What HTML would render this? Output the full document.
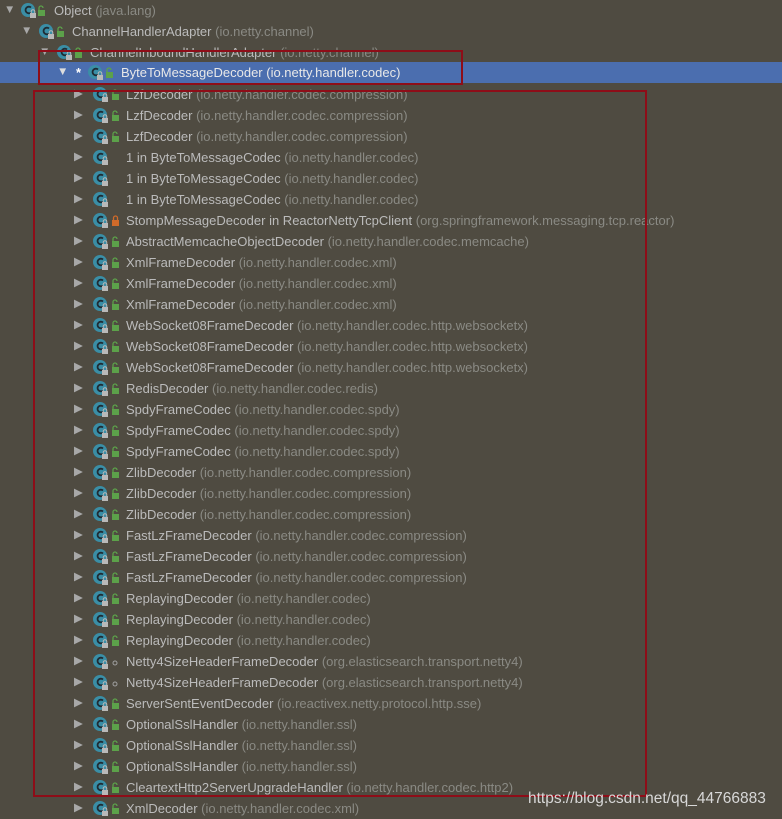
<!DOCTYPE html><html><head><meta charset="utf-8"><style>
body{margin:0;width:782px;height:819px;background:#4f4b41;overflow:hidden;font-family:"Liberation Sans",sans-serif;font-size:13px;color:#bbbbbb;position:relative}
.r{position:absolute;left:0;width:782px;height:21px;line-height:21px;white-space:nowrap;margin-top:1px}
.r span.p{color:#8a8a84}
.a{position:absolute;top:0;color:#a8a8a8;font-size:11.5px}
.ic{position:absolute;top:2px;width:20px;height:18px}
.t{position:absolute;top:0}
.sel{background:#4b6eaf;margin-top:0;line-height:21px}
.sel .t,.sel .t span.p{color:#e8e8e8}
.box{position:absolute;border:2px solid #8e0d18;box-sizing:border-box}
</style></head><body>
<svg width="0" height="0" style="position:absolute"><defs>
<symbol id="c" viewBox="0 0 20 18"><circle cx="8" cy="8" r="7" fill="#3a8ea6"/><path d="M11 5.5A3.3 3.3 0 1 0 11 10.5" stroke="#1f2b33" stroke-width="1.8" fill="none"/><rect x="10" y="11" width="6" height="5" fill="#b9b9b9"/><path d="M11.2 11V9.5a1.8 1.8 0 0 1 3.6 0V11" stroke="#b9b9b9" fill="none"/></symbol>
<symbol id="g" viewBox="0 0 10 18"><rect x="2" y="8" width="7" height="6" fill="#5ca14a"/><path d="M3 8V6a2 2 0 0 1 4 0" stroke="#5ca14a" stroke-width="1.3" fill="none"/></symbol>
<symbol id="o" viewBox="0 0 10 18"><rect x="2" y="8" width="7" height="6" fill="#d06a2a"/><path d="M3.5 8V6a2 2 0 0 1 4 0V8" stroke="#d06a2a" stroke-width="1.3" fill="none"/></symbol>
<symbol id="d" viewBox="0 0 10 18"><circle cx="5" cy="10" r="2" stroke="#a0a0a0" fill="none"/></symbol>
</defs></svg>

<div class="r" style="top:-1px"><span class="a" style="left:4px">▼</span><svg class="ic" style="left:20px"><use href="#c"/></svg><svg class="ic" style="left:36px;width:10px"><use href="#g"/></svg><span class="t" style="left:54px">Object <span class="p">(java.lang)</span></span></div>
<div class="r" style="top:20px"><span class="a" style="left:21px">▼</span><svg class="ic" style="left:38px"><use href="#c"/></svg><svg class="ic" style="left:55px;width:10px"><use href="#g"/></svg><span class="t" style="left:72px">ChannelHandlerAdapter <span class="p">(io.netty.channel)</span></span></div>
<div class="r" style="top:41px"><span class="a" style="left:39px">▼</span><svg class="ic" style="left:56px"><use href="#c"/></svg><svg class="ic" style="left:73px;width:10px"><use href="#g"/></svg><span class="t" style="left:90px">ChannelInboundHandlerAdapter <span class="p">(io.netty.channel)</span></span></div>
<div class="r sel" style="top:62px"><span class="a" style="left:57px;color:#ddd">▼</span><span class="t" style="left:76px;color:#fff;font-weight:bold">*</span><svg class="ic" style="left:87px"><use href="#c"/></svg><svg class="ic" style="left:104px;width:10px"><use href="#g"/></svg><span class="t" style="left:121px">ByteToMessageDecoder <span class="p">(io.netty.handler.codec)</span></span></div>

<div class="r" style="top:83px"><span class="a" style="left:74px">▶</span><svg class="ic" style="left:92px"><use href="#c"/></svg><svg class="ic" style="left:110px;width:10px"><use href="#g"/></svg><span class="t" style="left:126px">LzfDecoder <span class="p">(io.netty.handler.codec.compression)</span></span></div>
<div class="r" style="top:104px"><span class="a" style="left:74px">▶</span><svg class="ic" style="left:92px"><use href="#c"/></svg><svg class="ic" style="left:110px;width:10px"><use href="#g"/></svg><span class="t" style="left:126px">LzfDecoder <span class="p">(io.netty.handler.codec.compression)</span></span></div>
<div class="r" style="top:125px"><span class="a" style="left:74px">▶</span><svg class="ic" style="left:92px"><use href="#c"/></svg><svg class="ic" style="left:110px;width:10px"><use href="#g"/></svg><span class="t" style="left:126px">LzfDecoder <span class="p">(io.netty.handler.codec.compression)</span></span></div>
<div class="r" style="top:146px"><span class="a" style="left:74px">▶</span><svg class="ic" style="left:92px"><use href="#c"/></svg><span class="t" style="left:126px">1 in ByteToMessageCodec <span class="p">(io.netty.handler.codec)</span></span></div>
<div class="r" style="top:167px"><span class="a" style="left:74px">▶</span><svg class="ic" style="left:92px"><use href="#c"/></svg><span class="t" style="left:126px">1 in ByteToMessageCodec <span class="p">(io.netty.handler.codec)</span></span></div>
<div class="r" style="top:188px"><span class="a" style="left:74px">▶</span><svg class="ic" style="left:92px"><use href="#c"/></svg><span class="t" style="left:126px">1 in ByteToMessageCodec <span class="p">(io.netty.handler.codec)</span></span></div>
<div class="r" style="top:209px"><span class="a" style="left:74px">▶</span><svg class="ic" style="left:92px"><use href="#c"/></svg><svg class="ic" style="left:110px;width:10px"><use href="#o"/></svg><span class="t" style="left:126px">StompMessageDecoder in ReactorNettyTcpClient <span class="p">(org.springframework.messaging.tcp.reactor)</span></span></div>
<div class="r" style="top:230px"><span class="a" style="left:74px">▶</span><svg class="ic" style="left:92px"><use href="#c"/></svg><svg class="ic" style="left:110px;width:10px"><use href="#g"/></svg><span class="t" style="left:126px">AbstractMemcacheObjectDecoder <span class="p">(io.netty.handler.codec.memcache)</span></span></div>
<div class="r" style="top:251px"><span class="a" style="left:74px">▶</span><svg class="ic" style="left:92px"><use href="#c"/></svg><svg class="ic" style="left:110px;width:10px"><use href="#g"/></svg><span class="t" style="left:126px">XmlFrameDecoder <span class="p">(io.netty.handler.codec.xml)</span></span></div>
<div class="r" style="top:272px"><span class="a" style="left:74px">▶</span><svg class="ic" style="left:92px"><use href="#c"/></svg><svg class="ic" style="left:110px;width:10px"><use href="#g"/></svg><span class="t" style="left:126px">XmlFrameDecoder <span class="p">(io.netty.handler.codec.xml)</span></span></div>
<div class="r" style="top:293px"><span class="a" style="left:74px">▶</span><svg class="ic" style="left:92px"><use href="#c"/></svg><svg class="ic" style="left:110px;width:10px"><use href="#g"/></svg><span class="t" style="left:126px">XmlFrameDecoder <span class="p">(io.netty.handler.codec.xml)</span></span></div>
<div class="r" style="top:314px"><span class="a" style="left:74px">▶</span><svg class="ic" style="left:92px"><use href="#c"/></svg><svg class="ic" style="left:110px;width:10px"><use href="#g"/></svg><span class="t" style="left:126px">WebSocket08FrameDecoder <span class="p">(io.netty.handler.codec.http.websocketx)</span></span></div>
<div class="r" style="top:335px"><span class="a" style="left:74px">▶</span><svg class="ic" style="left:92px"><use href="#c"/></svg><svg class="ic" style="left:110px;width:10px"><use href="#g"/></svg><span class="t" style="left:126px">WebSocket08FrameDecoder <span class="p">(io.netty.handler.codec.http.websocketx)</span></span></div>
<div class="r" style="top:356px"><span class="a" style="left:74px">▶</span><svg class="ic" style="left:92px"><use href="#c"/></svg><svg class="ic" style="left:110px;width:10px"><use href="#g"/></svg><span class="t" style="left:126px">WebSocket08FrameDecoder <span class="p">(io.netty.handler.codec.http.websocketx)</span></span></div>
<div class="r" style="top:377px"><span class="a" style="left:74px">▶</span><svg class="ic" style="left:92px"><use href="#c"/></svg><svg class="ic" style="left:110px;width:10px"><use href="#g"/></svg><span class="t" style="left:126px">RedisDecoder <span class="p">(io.netty.handler.codec.redis)</span></span></div>
<div class="r" style="top:398px"><span class="a" style="left:74px">▶</span><svg class="ic" style="left:92px"><use href="#c"/></svg><svg class="ic" style="left:110px;width:10px"><use href="#g"/></svg><span class="t" style="left:126px">SpdyFrameCodec <span class="p">(io.netty.handler.codec.spdy)</span></span></div>
<div class="r" style="top:419px"><span class="a" style="left:74px">▶</span><svg class="ic" style="left:92px"><use href="#c"/></svg><svg class="ic" style="left:110px;width:10px"><use href="#g"/></svg><span class="t" style="left:126px">SpdyFrameCodec <span class="p">(io.netty.handler.codec.spdy)</span></span></div>
<div class="r" style="top:440px"><span class="a" style="left:74px">▶</span><svg class="ic" style="left:92px"><use href="#c"/></svg><svg class="ic" style="left:110px;width:10px"><use href="#g"/></svg><span class="t" style="left:126px">SpdyFrameCodec <span class="p">(io.netty.handler.codec.spdy)</span></span></div>
<div class="r" style="top:461px"><span class="a" style="left:74px">▶</span><svg class="ic" style="left:92px"><use href="#c"/></svg><svg class="ic" style="left:110px;width:10px"><use href="#g"/></svg><span class="t" style="left:126px">ZlibDecoder <span class="p">(io.netty.handler.codec.compression)</span></span></div>
<div class="r" style="top:482px"><span class="a" style="left:74px">▶</span><svg class="ic" style="left:92px"><use href="#c"/></svg><svg class="ic" style="left:110px;width:10px"><use href="#g"/></svg><span class="t" style="left:126px">ZlibDecoder <span class="p">(io.netty.handler.codec.compression)</span></span></div>
<div class="r" style="top:503px"><span class="a" style="left:74px">▶</span><svg class="ic" style="left:92px"><use href="#c"/></svg><svg class="ic" style="left:110px;width:10px"><use href="#g"/></svg><span class="t" style="left:126px">ZlibDecoder <span class="p">(io.netty.handler.codec.compression)</span></span></div>
<div class="r" style="top:524px"><span class="a" style="left:74px">▶</span><svg class="ic" style="left:92px"><use href="#c"/></svg><svg class="ic" style="left:110px;width:10px"><use href="#g"/></svg><span class="t" style="left:126px">FastLzFrameDecoder <span class="p">(io.netty.handler.codec.compression)</span></span></div>
<div class="r" style="top:545px"><span class="a" style="left:74px">▶</span><svg class="ic" style="left:92px"><use href="#c"/></svg><svg class="ic" style="left:110px;width:10px"><use href="#g"/></svg><span class="t" style="left:126px">FastLzFrameDecoder <span class="p">(io.netty.handler.codec.compression)</span></span></div>
<div class="r" style="top:566px"><span class="a" style="left:74px">▶</span><svg class="ic" style="left:92px"><use href="#c"/></svg><svg class="ic" style="left:110px;width:10px"><use href="#g"/></svg><span class="t" style="left:126px">FastLzFrameDecoder <span class="p">(io.netty.handler.codec.compression)</span></span></div>
<div class="r" style="top:587px"><span class="a" style="left:74px">▶</span><svg class="ic" style="left:92px"><use href="#c"/></svg><svg class="ic" style="left:110px;width:10px"><use href="#g"/></svg><span class="t" style="left:126px">ReplayingDecoder <span class="p">(io.netty.handler.codec)</span></span></div>
<div class="r" style="top:608px"><span class="a" style="left:74px">▶</span><svg class="ic" style="left:92px"><use href="#c"/></svg><svg class="ic" style="left:110px;width:10px"><use href="#g"/></svg><span class="t" style="left:126px">ReplayingDecoder <span class="p">(io.netty.handler.codec)</span></span></div>
<div class="r" style="top:629px"><span class="a" style="left:74px">▶</span><svg class="ic" style="left:92px"><use href="#c"/></svg><svg class="ic" style="left:110px;width:10px"><use href="#g"/></svg><span class="t" style="left:126px">ReplayingDecoder <span class="p">(io.netty.handler.codec)</span></span></div>
<div class="r" style="top:650px"><span class="a" style="left:74px">▶</span><svg class="ic" style="left:92px"><use href="#c"/></svg><svg class="ic" style="left:110px;width:10px"><use href="#d"/></svg><span class="t" style="left:126px">Netty4SizeHeaderFrameDecoder <span class="p">(org.elasticsearch.transport.netty4)</span></span></div>
<div class="r" style="top:671px"><span class="a" style="left:74px">▶</span><svg class="ic" style="left:92px"><use href="#c"/></svg><svg class="ic" style="left:110px;width:10px"><use href="#d"/></svg><span class="t" style="left:126px">Netty4SizeHeaderFrameDecoder <span class="p">(org.elasticsearch.transport.netty4)</span></span></div>
<div class="r" style="top:692px"><span class="a" style="left:74px">▶</span><svg class="ic" style="left:92px"><use href="#c"/></svg><svg class="ic" style="left:110px;width:10px"><use href="#g"/></svg><span class="t" style="left:126px">ServerSentEventDecoder <span class="p">(io.reactivex.netty.protocol.http.sse)</span></span></div>
<div class="r" style="top:713px"><span class="a" style="left:74px">▶</span><svg class="ic" style="left:92px"><use href="#c"/></svg><svg class="ic" style="left:110px;width:10px"><use href="#g"/></svg><span class="t" style="left:126px">OptionalSslHandler <span class="p">(io.netty.handler.ssl)</span></span></div>
<div class="r" style="top:734px"><span class="a" style="left:74px">▶</span><svg class="ic" style="left:92px"><use href="#c"/></svg><svg class="ic" style="left:110px;width:10px"><use href="#g"/></svg><span class="t" style="left:126px">OptionalSslHandler <span class="p">(io.netty.handler.ssl)</span></span></div>
<div class="r" style="top:755px"><span class="a" style="left:74px">▶</span><svg class="ic" style="left:92px"><use href="#c"/></svg><svg class="ic" style="left:110px;width:10px"><use href="#g"/></svg><span class="t" style="left:126px">OptionalSslHandler <span class="p">(io.netty.handler.ssl)</span></span></div>
<div class="r" style="top:776px"><span class="a" style="left:74px">▶</span><svg class="ic" style="left:92px"><use href="#c"/></svg><svg class="ic" style="left:110px;width:10px"><use href="#g"/></svg><span class="t" style="left:126px">CleartextHttp2ServerUpgradeHandler <span class="p">(io.netty.handler.codec.http2)</span></span></div>
<div class="r" style="top:797px"><span class="a" style="left:74px">▶</span><svg class="ic" style="left:92px"><use href="#c"/></svg><svg class="ic" style="left:110px;width:10px"><use href="#g"/></svg><span class="t" style="left:126px">XmlDecoder <span class="p">(io.netty.handler.codec.xml)</span></span></div>

<div class="box" style="left:38px;top:50px;width:425px;height:35px"></div>
<div class="box" style="left:33px;top:90px;width:614px;height:707px"></div>
<div style="position:absolute;left:528px;top:790px;font-family:'Liberation Sans',sans-serif;font-size:15.5px;color:#d8d8d8">https://blog.csdn.net/qq_44766883</div>
</body></html>
